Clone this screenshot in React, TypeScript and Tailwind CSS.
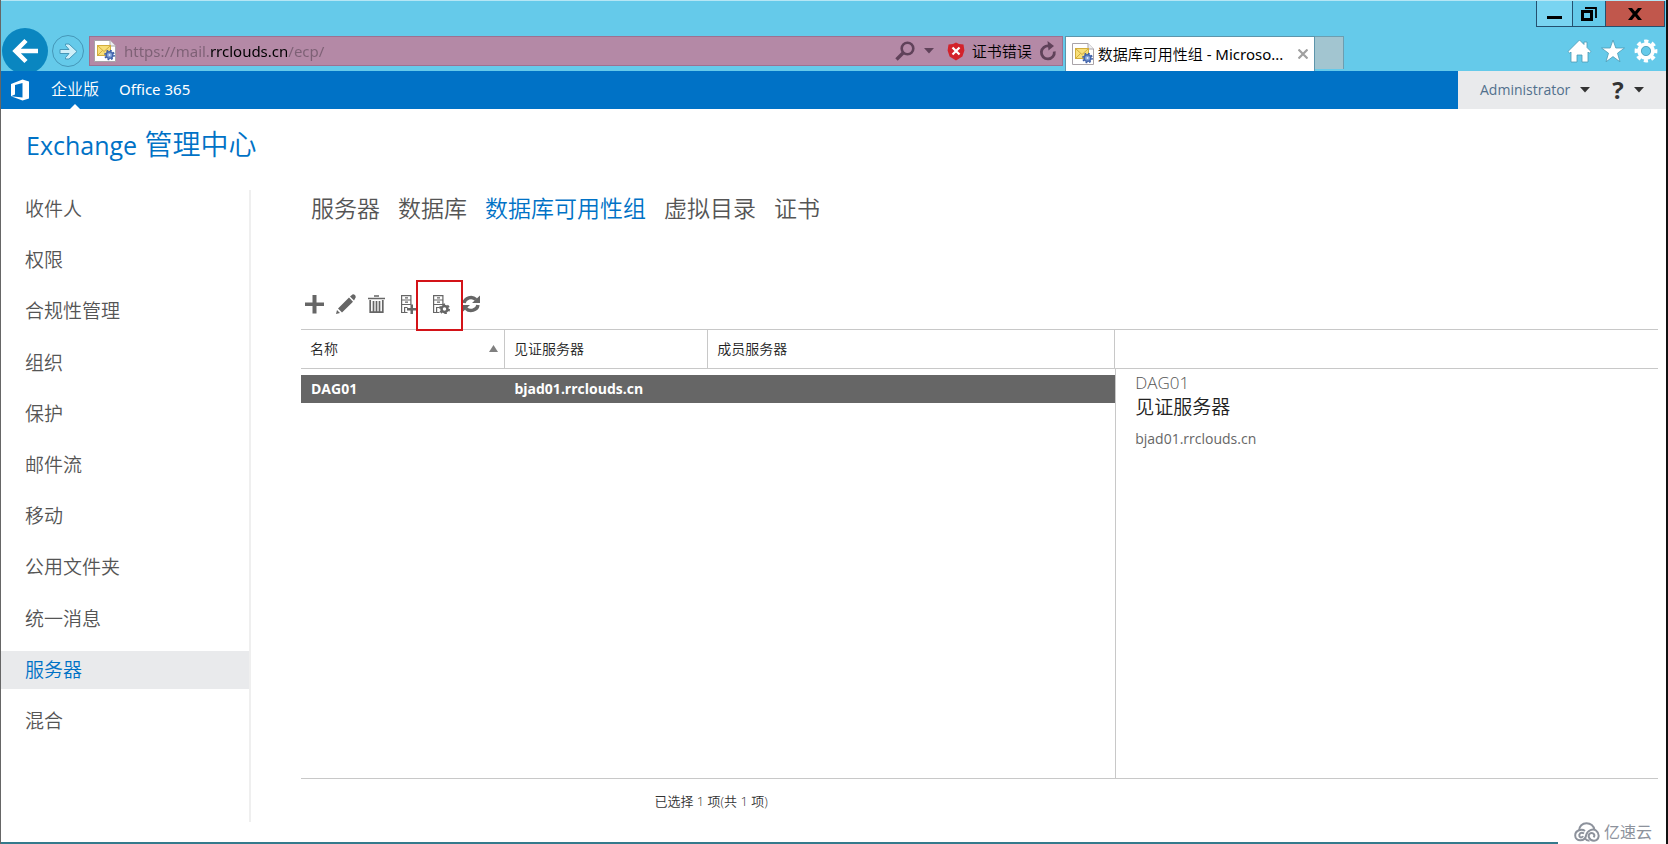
import React, { useState } from 'react';

const navItems = ['收件人', '权限', '合规性管理', '组织', '保护', '邮件流', '移动', '公用文件夹', '统一消息', '服务器', '混合'];
const tabs = ['服务器', '数据库', '数据库可用性组', '虚拟目录', '证书'];

function PageIcon() {
  return (
    <svg className="w-[22px] h-[22px] shrink-0" viewBox="0 0 22 22" aria-hidden="true">
      <path d="M.5.5h15.5l5.500 5.500v15.500H.5z" fill="#fff" stroke="#a9a3a8" />
      <path d="M16 .5V6h5.500" fill="#eef0f2" stroke="#a9a3a8" />
      <rect x="3.500" y="5.500" width="13" height="10" fill="#f8df79" stroke="#d3ae3c" />
      <path d="M4 6l6 5.500L16 6M4 15l4.500-4.500M16 15l-4-4.500" fill="none" stroke="#c9a02f" strokeWidth=".8" />
      <circle cx="15.500" cy="15" r="3.300" fill="#7f9fd6" stroke="#4466ad" strokeWidth="1.500" />
      <circle cx="15.500" cy="15" r="4.600" fill="none" stroke="#3a5ca5" strokeWidth="1.500" strokeDasharray="1.800 1.800" />
      <circle cx="15.500" cy="15" r="1" fill="#e6eefb" />
    </svg>
  );
}

function Caret({ className }: { className: string }) {
  return (
    <svg className={`w-[10px] h-[6px] shrink-0 ${className}`} viewBox="0 0 10 6" aria-hidden="true">
      <path d="M0 0h10L5 5.500z" fill="currentColor" />
    </svg>
  );
}

function ServerShape() {
  return (
    <g fill="none" stroke="#666" strokeWidth="1.200">
      <path d="M7.500 18.500H1.600V1.600h9.300V11" />
      <path d="M1.600 6h9.300M1.600 10.500h9.300M5 3.800h3M5 8.200h3" />
      <path d="M4.600 18V13.500h3" />
    </g>
  );
}

function BrowserChrome() {
  const [url, setUrl] = useState('https://mail.rrclouds.cn/ecp/');

  return (
    <header className="h-[71px] bg-[#65caea] border-t border-[#b5e6f5]">
      {/* Window buttons */}
      <div className="flex justify-end h-[26px] pr-px">
        <div className="flex border-x border-b border-[#24506f]">
          <button aria-label="Minimize" className="w-[35px] flex items-center justify-center bg-[#79d4f1]">
            <svg className="w-[15px] h-[12px]" viewBox="0 0 15 12"><path d="M0 8h15v3H0z" /></svg>
          </button>
          <button aria-label="Restore" className="w-[33px] flex items-center justify-center border-l border-[#24506f]">
            <svg className="w-[16px] h-[14px]" viewBox="0 0 16 14" fill="none" stroke="#000">
              <path d="M1.500 4.500h9v8h-9z" strokeWidth="3" />
              <path d="M4 1h11v10" strokeWidth="1.800" />
            </svg>
          </button>
          <button aria-label="Close" className="w-[59px] flex items-center justify-center bg-[#c1574c] border-l border-[#24506f]">
            <svg className="w-[14px] h-[12px]" viewBox="0 0 14 12"><path d="M0 0h4l3 3.500L10 0h4L9.200 6l4.800 6h-4L7 8.300 4 12H0l4.800-6z" /></svg>
          </button>
        </div>
      </div>

      {/* Address row */}
      <div className="flex h-[44px] pl-px pr-2 overflow-hidden">
        <button aria-label="Back" className="w-[46px] h-[46px] mt-px shrink-0 rounded-full bg-[#0a86c0] flex items-center justify-center">
          <svg className="w-[26px] h-[26px]" viewBox="0 0 26 26" fill="none" stroke="#fff" strokeWidth="4.500">
            <path d="M26 13H4M14 2.500L3.500 13 14 23.500" />
          </svg>
        </button>
        <button aria-label="Forward" className="w-[32px] h-[32px] mt-2 ml-1 shrink-0 rounded-full border border-[#4597b8] flex items-center justify-center">
          <svg className="w-[19px] h-[17px]" viewBox="0 0 19 17">
            <path d="M1 6.500h9L6.500 2.500V1h3.500l8 7.500-8 7.500H6.500v-1.500l3.500-4H1z" fill="#cdeff9" stroke="#4597b8" />
          </svg>
        </button>
        <div className="flex items-center w-[58.8%] h-[30px] mt-[9px] ml-[5px] pl-1 pr-[5px] bg-[#b489a6] border border-[#9c7191]">
          <PageIcon />
          <input
            aria-label="Address"
            value={url}
            onChange={(e) => setUrl(e.target.value)}
            className="flex-1 min-w-0 ml-2 font-['Noto_Sans',sans-serif] text-[15px] outline-none text-transparent caret-black bg-clip-text bg-[linear-gradient(to_right,#7d6075_87px,#000_87px,#000_163px,#7d6075_163px)]"
          />
          <button aria-label="Search" className="text-[#60425a]">
            <svg className="w-[20px] h-[20px]" viewBox="0 0 20 20" fill="none" stroke="currentColor">
              <circle cx="12.500" cy="7.500" r="5.800" strokeWidth="2.600" />
              <path d="M8 12l-6.500 6.500" strokeWidth="3.400" />
            </svg>
          </button>
          <Caret className="ml-[9px] text-[#60425a]" />
          <button className="flex items-center ml-[13px] text-[15px] font-[350]">
            <svg className="w-[18px] h-[19px] mr-[7px]" viewBox="0 0 18 19">
              <path d="M9 .5L12 2l4.500.5.9 6-2 6L9 18.500l-6.400-4-2-6 .9-6L6 2z" fill="#d3222b" />
              <path d="M5.500 5.500l7 7M12.500 5.500l-7 7" stroke="#fff" strokeWidth="2.200" />
            </svg>
            证书错误
          </button>
          <button aria-label="Refresh" className="ml-[7px] text-[#60425a]">
            <svg className="w-[18px] h-[20px]" viewBox="0 0 18 20" fill="none" stroke="currentColor">
              <path d="M15.300 10.500A6.500 6.500 0 1 1 10 5" strokeWidth="2.800" />
              <path d="M8.500 0l6.500 5-5.500 4.500z" fill="currentColor" stroke="none" />
            </svg>
          </button>
        </div>
        <div className="flex items-center w-[250px] h-[35px] mt-[9px] ml-0.5 px-1.5 shrink-0 bg-white border-t border-x border-[#5d95ab]">
          <PageIcon />
          <span className="ml-1 text-[15px] font-[350] whitespace-nowrap flex-1">
            数据库可用性组 <span className="font-['Noto_Sans',sans-serif] font-normal">- Microso...</span>
          </span>
          <button aria-label="Close tab">
            <svg className="w-[10px] h-[10px]" viewBox="0 0 10 10" stroke="#a0a0a0" strokeWidth="2.200"><path d="M.5.5l9 9M9.500.5l-9 9" /></svg>
          </button>
        </div>
        <button aria-label="New tab" className="w-[29px] h-[33px] mt-[9px] shrink-0 bg-[#a2c5d0] border-t border-r border-[#6c9eb0]" />
        <div className="flex items-center gap-[9px] ml-auto mt-1">
          <button aria-label="Home">
            <svg className="w-[25px] h-[24px]" viewBox="0 0 25 24" fill="#fff" stroke="#4b9ab5" strokeWidth=".8">
              <path d="M12.500 1L1 12.500l1.800 1.700L4 13v10h6v-7h5v7h6V13l1.200 1.200 1.800-1.700-4-4V3h-3v2.500z" />
            </svg>
          </button>
          <button aria-label="Favorites">
            <svg className="w-[24px] h-[24px]" viewBox="0 0 24 24" fill="#fff" stroke="#4b9ab5" strokeWidth=".8">
              <path d="M12 1l2.800 8H23.500l-7 5.200L19 22.800l-7-5.200-7 5.200 2.500-8.600L.5 9h8.700z" />
            </svg>
          </button>
          <button aria-label="Tools">
            <svg className="w-[24px] h-[24px]" viewBox="0 0 24 24" fill="none">
              <circle cx="12" cy="12" r="9.700" stroke="#fff" strokeWidth="3.400" strokeDasharray="4.200 3.418" strokeDashoffset="2.100" />
              <circle cx="12" cy="12" r="6.800" stroke="#fff" strokeWidth="4" />
              <circle cx="12" cy="12" r="4.600" stroke="#4b9ab5" strokeWidth=".8" />
            </svg>
          </button>
        </div>
      </div>
    </header>
  );
}

function SuiteBar() {
  return (
    <div className="flex h-[38px] bg-[#0072c6] text-white">
      <div className="flex items-center flex-1 pl-[9px]">
        <svg className="w-[21px] h-[22px]" viewBox="0 0 21 22" aria-label="Office">
          <path d="M1 5L12.500.5 19 2.500v17L12.500 21.500 1 17.200l11.500 1.300V4L5 6v9.500L1 17.200z" fill="#fff" />
        </svg>
        <a href="#enterprise" className="relative flex items-center h-full ml-5 pb-0.5 text-base font-[350]">
          企业版
          <span className="absolute bottom-0 left-1/2 -translate-x-1/2 border-x-[5px] border-b-[5px] border-x-transparent border-b-white" />
        </a>
        <a href="#office" className="ml-5 pb-0.5 font-['Noto_Sans',sans-serif] text-[15px]">Office 365</a>
      </div>
      <div className="flex items-center w-[208px] pl-[22px] bg-[#e9eaec] text-[#333]">
        <button className="flex items-center gap-2.5 text-sm text-[#52708c]">
          Administrator
          <Caret className="text-[#333]" />
        </button>
        <button aria-label="Help" className="flex items-center gap-2.5 ml-[22px] text-2xl leading-8 font-bold">
          ?
          <Caret className="text-[#333]" />
        </button>
      </div>
    </div>
  );
}

function Toolbar() {
  return (
    <div className="flex items-center h-[20px] pl-1">
      <button aria-label="新建">
        <svg className="w-[19px] h-[20px]" viewBox="0 0 19 20"><path d="M7.500 1h4v7.500H19v3.500h-7.500v7.500h-4V12H0V8.500h7.500z" fill="#666" /></svg>
      </button>
      <button aria-label="编辑" className="ml-3">
        <svg className="w-[20px] h-[20px]" viewBox="0 0 20 20" fill="#666">
          <path d="M0 20l1-4 3 3zM2 14.500L13 3.500l4 4.200L6 18.500zM14 2.500L16.500.5c1.500-.8 4 1.500 3 3.300L18 6.500z" />
        </svg>
      </button>
      <button aria-label="删除" className="ml-3">
        <svg className="w-[17px] h-[20px]" viewBox="0 0 17 20" fill="none" stroke="#666">
          <path d="M6 2h5M0 4.500h17" strokeWidth="1.600" />
          <path d="M2.200 6v12.200h12.600V6M5.500 7v11M8.500 7v11M11.500 7v11" strokeWidth="1.700" />
        </svg>
      </button>
      <button aria-label="管理成员" className="ml-[15px]">
        <svg className="w-[17px] h-[20px]" viewBox="0 0 17 20">
          <ServerShape />
          <path d="M10.500 10.500h2.500V14h4v2.500h-4V20h-2.500v-3.500H7V14h3.500z" fill="#666" />
        </svg>
      </button>
      <button aria-label="管理 DAG 网络" className="relative ml-[15px]">
        <svg className="w-[18px] h-[20px]" viewBox="0 0 18 20">
          <ServerShape />
          <circle cx="12.500" cy="15" r="3" fill="#fff" stroke="#666" strokeWidth="2.500" />
          <circle cx="12.500" cy="15" r="4.600" fill="none" stroke="#666" strokeWidth="1.800" strokeDasharray="2.400 2.417" />
        </svg>
        <span className="absolute -left-4 -top-3.5 w-[47px] h-[51px] border-2 border-[#d31318]" />
      </button>
      <button aria-label="刷新" className="ml-3">
        <svg className="w-[18px] h-[20px]" viewBox="0 0 18 20" fill="none" stroke="#666" strokeWidth="3.400">
          <path d="M2 9a7 6.500 0 0 1 12-3.500M16 11a7 6.500 0 0 1-12 3.500" />
          <path d="M18 1.500V9h-8zM0 18.500V11h8z" fill="#666" stroke="none" />
        </svg>
      </button>
    </div>
  );
}

function DagList() {
  return (
    <section>
      <div className="flex min-h-[450px] border-y border-[#c8c8c8]">
        <div className="w-3/5">
          <table className="w-full table-fixed text-sm text-left">
            <thead>
              <tr className="h-[38px] border-b border-[#c8c8c8] text-[#222]">
                <th className="w-1/4 pl-[9px] pr-1.5 font-[350] border-r border-[#c8c8c8]">
                  <button className="flex items-center justify-between w-full">
                    名称
                    <svg className="w-[9px] h-[7px]" viewBox="0 0 9 7"><path d="M4.500 0L9 7H0z" fill="#808080" /></svg>
                  </button>
                </th>
                <th className="w-1/4 pl-[9px] font-[350] border-r border-[#c8c8c8]">见证服务器</th>
                <th className="w-1/2 pl-[9px] font-[350] border-r border-[#c8c8c8]">成员服务器</th>
              </tr>
            </thead>
            <tbody>
              <tr className="h-[7px]"><td colSpan={3} /></tr>
              <tr className="h-[28px] bg-[#666] text-white font-bold">
                <td className="pl-2.5">DAG01</td>
                <td className="pl-2.5">bjad01.rrclouds.cn</td>
                <td />
              </tr>
            </tbody>
          </table>
        </div>
        <aside className="flex flex-col w-2/5">
          <div className="h-[39px] border-b border-[#c8c8c8]" />
          <div className="flex-1 pl-[19px] pt-0.5 border-l border-[#c8c8c8]">
            <h2 className="text-[17px] leading-6 font-light text-[#555]">DAG01</h2>
            <h3 className="text-[19px] leading-6 font-[350] text-[#222]">见证服务器</h3>
            <p className="mt-2 text-sm leading-6 text-[#666]">bjad01.rrclouds.cn</p>
          </div>
        </aside>
      </div>
      <p className="w-3/5 mt-3 pl-1.5 text-center text-[13px] leading-5 font-[350] text-[#333]">已选择 1 项(共 1 项)</p>
    </section>
  );
}

function Watermark() {
  return (
    <div className="absolute right-3.5 bottom-0 flex items-center gap-1 text-base leading-6 text-[#8d929c]">
      <svg className="w-[26px] h-[20px]" viewBox="0 0 26 20" fill="none" stroke="currentColor" strokeWidth="2">
        <path d="M5 9C5 4 8.500 1.200 12.500 1.200S20 4 20.500 8" />
        <path d="M11 9C8 6.500 1.200 8 1.200 13.500c0 6 9.800 7 11-.5C13.500 8 19 6.500 22 8.500c4 3 3.500 10-2 10.200-5 0-7-5.500-3.500-7.500 3-1 5 2 3 4" />
        <path d="M10 11.500c-3-2-5.500.5-4.500 3 1 1.500 3 1 3.500-.5" />
        <path d="M11 16.500c1 1.500 2.500 2.200 4.500 2.200" />
      </svg>
      亿速云
    </div>
  );
}

export default function App() {
  const [activeNav, setActiveNav] = useState('服务器');
  const [activeTab, setActiveTab] = useState('数据库可用性组');

  return (
    <div className="relative flex flex-col min-h-screen bg-white border-l border-r-2 border-l-[#666] border-r-[#111] font-['Open_Sans','Noto_Sans_CJK_SC',sans-serif]">
      <BrowserChrome />
      <SuiteBar />

      <main className="flex-1">
        <h1 className="pt-[15px] pl-[25px] text-[28px] leading-10 text-[#0072c6] font-[350]">
          <span className="text-[25px] leading-none font-normal">Exchange</span> 管理中心
        </h1>

        <div className="flex mt-[26px]">
          {/* Feature navigation */}
          <nav className="w-[250px] h-[632px] shrink-0 border-r-2 border-[#efefef]">
            <ul className="flex flex-col justify-between h-[550px]">
              {navItems.map((item) => (
                <li key={item}>
                  <a
                    href="#nav"
                    onClick={() => setActiveNav(item)}
                    className={`block pl-6 text-[19px] leading-[38px] font-[350] ${activeNav === item ? 'bg-[#e9eaec] text-[#0072c6]' : 'text-[#555]'}`}
                  >
                    {item}
                  </a>
                </li>
              ))}
            </ul>
          </nav>

          <div className="flex-1 min-w-0 pl-[50px] pr-2">
            <div className="flex gap-[18px] pl-2.5 text-[23px] leading-9 font-[350]">
              {tabs.map((tab) => (
                <button
                  key={tab}
                  onClick={() => setActiveTab(tab)}
                  className={activeTab === tab ? 'text-[#0072c6]' : 'text-[#555]'}
                >
                  {tab}
                </button>
              ))}
            </div>
            <div className="mt-[68px] mb-[15px]">
              <Toolbar />
            </div>
            <DagList />
          </div>
        </div>
      </main>

      <div className="w-[93.5%] h-0.5 bg-[#347a8c]" />
      <Watermark />
    </div>
  );
}
